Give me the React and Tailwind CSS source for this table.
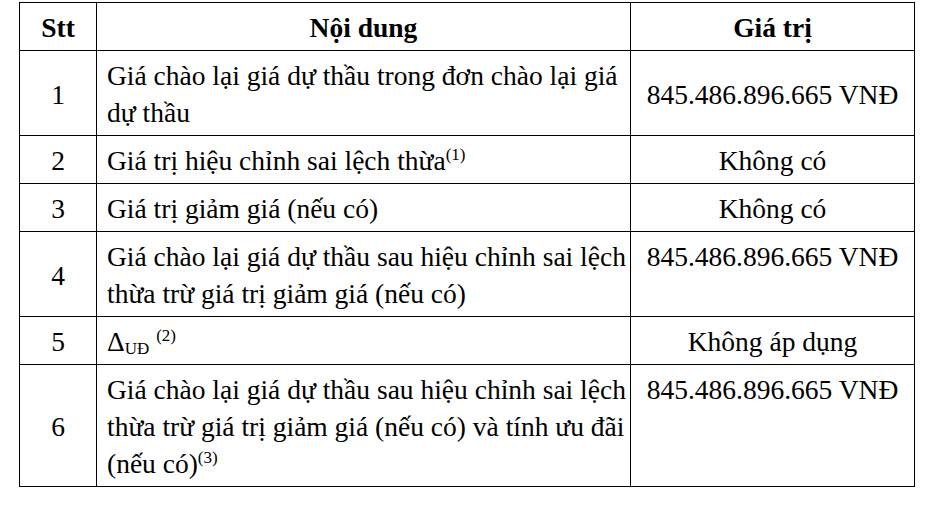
const rows = [
  {
    stt: "1",
    content: ["Giá chào lại giá dự thầu trong đơn chào lại giá", "dự thầu"],
    value: "845.486.896.665 VNĐ",
    middle: true,
  },
  {
    stt: "2",
    content: [
      <>
        Giá trị hiệu chỉnh sai lệch thừa<sup className="text-[17px] relative -top-[10px] align-baseline">(1)</sup>
      </>,
    ],
    value: "Không có",
  },
  { stt: "3", content: ["Giá trị giảm giá (nếu có)"], value: "Không có" },
  {
    stt: "4",
    content: ["Giá chào lại giá dự thầu sau hiệu chỉnh sai lệch", "thừa trừ giá trị giảm giá (nếu có)"],
    value: "845.486.896.665 VNĐ",
  },
  {
    stt: "5",
    content: [
      <>
        Δ<sub className="text-[17px] align-baseline relative top-[3px]">UĐ</sub>{" "}
        <sup className="text-[17px] align-baseline relative -top-[10px]">(2)</sup>
      </>,
    ],
    value: "Không áp dụng",
  },
  {
    stt: "6",
    content: [
      "Giá chào lại giá dự thầu sau hiệu chỉnh sai lệch",
      "thừa trừ giá trị giảm giá (nếu có) và tính ưu đãi",
      <>
        (nếu có)<sup className="text-[17px] relative -top-[10px] align-baseline">(3)</sup>
      </>,
    ],
    value: "845.486.896.665 VNĐ",
  },
];

export default function App() {
  return (
    <div className="w-[944px] h-[511px] bg-white pt-[2px] pl-[19px] font-['Liberation_Serif',serif] text-black text-[27.5px] leading-[37px]">
      <table className="border-collapse w-[896px] table-fixed">
        <colgroup>
          <col className="w-[77px]" />
          <col className="w-[534px]" />
          <col />
        </colgroup>
        <thead>
          <tr className="h-[48px]">
            <th className="border border-black font-bold text-center pt-[6px] pb-[4px]">Stt</th>
            <th className="border border-black font-bold text-center pt-[6px] pb-[4px]">Nội dung</th>
            <th className="border border-black font-bold text-center pt-[6px] pb-[4px]">Giá trị</th>
          </tr>
        </thead>
        <tbody>
          {rows.map((r) => (
            <tr key={r.stt}>
              <td className="border border-black text-center align-middle pt-[6px] pb-[4px]">{r.stt}</td>
              <td className="border border-black align-top px-[10px] pt-[6px] pb-[4px] whitespace-nowrap">
                {r.content.map((line, i) => (
                  <div key={i}>{line}</div>
                ))}
              </td>
              <td
                className={`border border-black text-center pt-[6px] pb-[4px] whitespace-nowrap ${
                  r.middle ? "align-middle" : "align-top"
                }`}
              >
                {r.value}
              </td>
            </tr>
          ))}
        </tbody>
      </table>
    </div>
  );
}
